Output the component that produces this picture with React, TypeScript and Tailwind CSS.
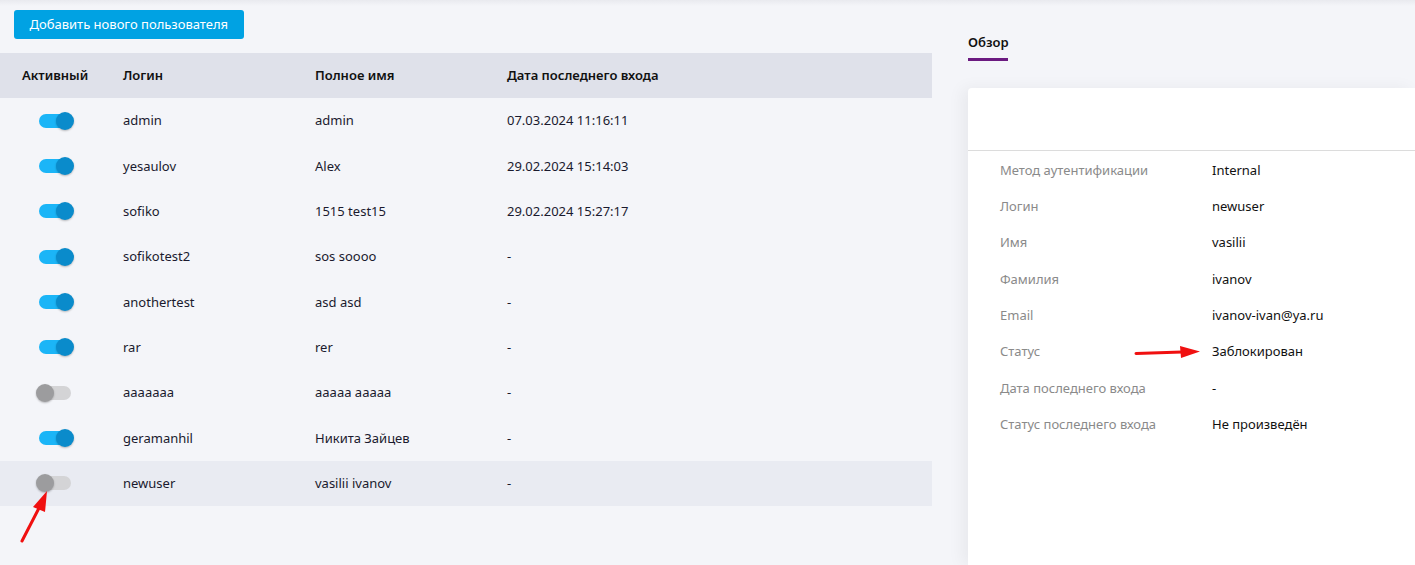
import React from "react";

type User = {
  active: boolean;
  login: string;
  name: string;
  date: string;
};

const users: User[] = [
  { active: true, login: "admin", name: "admin", date: "07.03.2024 11:16:11" },
  { active: true, login: "yesaulov", name: "Alex", date: "29.02.2024 15:14:03" },
  { active: true, login: "sofiko", name: "1515 test15", date: "29.02.2024 15:27:17" },
  { active: true, login: "sofikotest2", name: "sos soooo", date: "-" },
  { active: true, login: "anothertest", name: "asd asd", date: "-" },
  { active: true, login: "rar", name: "rer", date: "-" },
  { active: false, login: "aaaaaaa", name: "aaaaa aaaaa", date: "-" },
  { active: true, login: "geramanhil", name: "Никита Зайцев", date: "-" },
  { active: false, login: "newuser", name: "vasilii ivanov", date: "-" },
];

const details: [string, string][] = [
  ["Метод аутентификации", "Internal"],
  ["Логин", "newuser"],
  ["Имя", "vasilii"],
  ["Фамилия", "ivanov"],
  ["Email", "ivanov-ivan@ya.ru"],
  ["Статус", "Заблокирован"],
  ["Дата последнего входа", "-"],
  ["Статус последнего входа", "Не произведён"],
];

function Toggle({ on }: { on: boolean }) {
  return (
    <div className="relative w-[38px] h-[20px] flex items-center">
      <div
        className={
          on
            ? "ml-[3px] w-[32px] h-[14px] rounded-full bg-[#1bb5f7]"
            : "ml-[3px] w-[32px] h-[14px] rounded-full bg-[#d4d4d6]"
        }
      />
      <div
        className={
          on
            ? "absolute right-0 top-[1px] w-[18px] h-[18px] rounded-full bg-[#0a8bcb] shadow-[0_1px_2px_rgba(0,0,0,0.25)]"
            : "absolute left-0 top-[1px] w-[18px] h-[18px] rounded-full bg-[#9c9c9e] shadow-[0_1px_2px_rgba(0,0,0,0.25)]"
        }
      />
    </div>
  );
}

export default function App() {
  return (
    <div
      className="relative w-[1415px] h-[565px] overflow-hidden bg-[#f4f5f9] text-[13px] text-[#1a1a2e]"
      style={{ fontFamily: '"Noto Sans", "Open Sans", sans-serif' }}
    >
      <div className="absolute inset-x-0 top-0 h-[6px] bg-gradient-to-b from-[#e9eaef] to-transparent" />
      <div className="flex h-full">
        {/* left: users table */}
        <div className="w-[932px] shrink-0 pt-[10px]">
          <button className="ml-[14px] h-[29px] px-[15.5px] rounded-[3px] bg-[#00a2e3] text-white text-[13px]">
            Добавить нового пользователя
          </button>
          <div className="mt-[14px]">
            <div className="flex items-center h-[45px] bg-[#dfe1ea] font-semibold text-[13px] text-[#111]">
              <div className="w-[123px] pl-[22px]">Активный</div>
              <div className="w-[192px]">Логин</div>
              <div className="w-[192px]">Полное имя</div>
              <div>Дата последнего входа</div>
            </div>
            {users.map((u) => (
              <div
                key={u.login}
                className={
                  u.login === "newuser"
                    ? "flex items-center h-[45.33px] bg-[#e9ebf2]"
                    : "flex items-center h-[45.33px]"
                }
              >
                <div className="w-[123px] pl-[36px]">
                  <Toggle on={u.active} />
                </div>
                <div className="w-[192px] pt-[1px]">{u.login}</div>
                <div className="w-[192px] pt-[1px]">{u.name}</div>
                <div className="pt-[1px]">{u.date}</div>
              </div>
            ))}
          </div>
        </div>

        {/* right: details */}
        <div className="flex-1 pl-[36px] pt-[33px] flex flex-col">
          <div className="w-[40px] pb-[5px] border-b-[3px] border-[#6b1a80] font-semibold text-[13px] text-[#111]">
            Обзор
          </div>
          <div className="mt-[27px] flex-1 bg-white rounded-tl-[4px] shadow-[-6px_0_16px_rgba(0,0,0,0.05)]">
            <div className="h-[63px] border-b border-[#dcdcdc]" />
            <div className="pl-[32px] pt-[2px]">
              {details.map(([k, v]) => (
                <div key={k} className="flex items-center h-[36.3px]">
                  <div className="w-[212px] text-[#8a8a8a]">{k}</div>
                  <div className="text-[#111]">{v}</div>
                </div>
              ))}
            </div>
          </div>
        </div>
      </div>

      {/* annotation arrows */}
      <svg
        className="absolute left-0 top-0 pointer-events-none"
        width="1415"
        height="565"
        viewBox="0 0 1415 565"
      >
        <line x1="22" y1="541" x2="39" y2="508" stroke="#f01010" strokeWidth="3" strokeLinecap="round" />
        <polygon points="47,491 33,507 45,512" fill="#f01010" />
        <line x1="1136" y1="353.5" x2="1182" y2="352" stroke="#f01010" strokeWidth="3" strokeLinecap="round" />
        <polygon points="1200,351.5 1180,346 1181,358" fill="#f01010" />
      </svg>
    </div>
  );
}
